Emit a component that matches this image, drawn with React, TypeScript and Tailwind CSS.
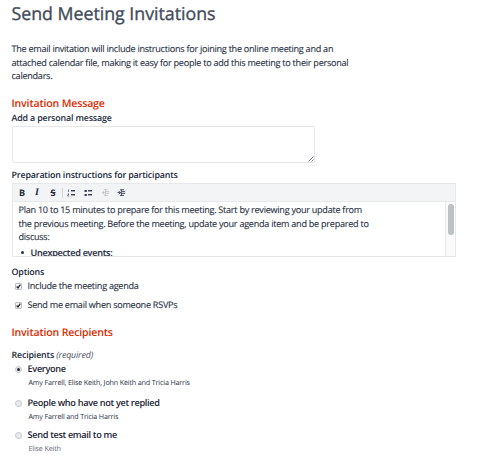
import React from 'react';

const font = 'font-["Open_Sans","Noto_Sans",sans-serif] [text-rendering:geometricPrecision]';
const body = 'text-[9.1px] tracking-[-0.265px] [-webkit-text-stroke:0.12px_#2a3143]';
const label = 'text-[8.9px] leading-[14px] font-semibold tracking-[-0.17px] text-[#222a3d]';
const section = 'text-[10.6px] leading-[15px] font-semibold tracking-[-0.17px] text-[#dc2c00]';

function ListIcon({ ordered }: { ordered?: boolean }) {
  return (
    <svg width="9" height="8" viewBox="0 0 9 8" fill="none" stroke="#3b4252">
      {ordered ? (
        <path d="M1.5 0.5v2.5M0.5 5h1.5l-1.5 2h1.7" strokeWidth="0.7" />
      ) : (
        <path d="M0.5 2h2.3M0.5 6h2.3" strokeWidth="2" />
      )}
      <path d="M4 1.5h4M4 5.5h4" strokeWidth="1" />
      <path d="M4 2.5h4M4 6.5h4" strokeWidth="1" opacity="0.45" />
    </svg>
  );
}

function IndentIcon({ out }: { out?: boolean }) {
  return (
    <svg width="9" height="8" viewBox="0 0 9 8" fill="none" stroke={out ? '#c3c6cb' : '#3b4252'}>
      <path d="M3 0.8h4M5 2.6h3.2M5 4.4h3.2M3 6.4h4M4.4 0.5v6.5" strokeWidth="0.9" />
      <path d={out ? 'M3.2 2.2L1.2 3.6l2 1.4M1 3.6h3' : 'M0.5 3.6h3M1.7 2.2l2 1.4-2 1.4'} strokeWidth="0.9" />
    </svg>
  );
}

function Checkbox() {
  return (
    <span className="flex h-[7px] w-[7px] items-center justify-center rounded-[1px] border border-[#bfc2c5] bg-[#f1f2f3]">
      <svg className="shrink-0" width="7" height="7" viewBox="0 0 7 7" fill="none" stroke="#20242c" strokeWidth="1.2">
        <path d="M1.7 3.5l1.3 1.5L5.3 1.6" />
      </svg>
    </span>
  );
}

function Radio({ checked }: { checked?: boolean }) {
  return (
    <span className="flex h-[7px] w-[7px] items-center justify-center rounded-full border border-[#c3c6c9] bg-[#e8e9eb]">
      {checked && <span className="h-[3px] w-[3px] rounded-full bg-[#252a33]" />}
    </span>
  );
}

function Recipient({ name, people, checked, muted }: { name: string; people: string; checked?: boolean; muted?: boolean }) {
  return (
    <div>
      <div className="flex h-[14px] items-center gap-[6px] pl-[3px]">
        <Radio checked={checked} />
        <span className="text-[9.2px] font-semibold tracking-[-0.33px] text-[#1b2336]">{name}</span>
      </div>
      <div className={`h-[14px] pl-[17px] text-[7.2px] leading-[14px] tracking-[-0.17px] ${muted ? 'text-[#666b78]' : 'text-[#2c3345]'}`}>
        {people}
      </div>
    </div>
  );
}

export default function App() {
  return (
    <main className={`${font} h-[456px] w-[480px] overflow-hidden bg-white pl-[11.5px] whitespace-nowrap text-[#2a3143]`}>
      <h1 className="h-[42px] text-[17.8px] leading-[29px] font-medium tracking-[-0.02px] text-[#434b5a] [-webkit-text-stroke:0.35px_#434b5a]">Send Meeting Invitations</h1>
      <p className={`h-[55px] leading-[13.5px] ${body}`}>
        The email invitation will include instructions for joining the online meeting and an
        <br />
        attached calendar file, making it easy for people to add this meeting to their personal
        <br />
        calendars.
      </p>
      <h2 className={`h-[14px] ${section}`}>Invitation Message</h2>
      <h3 className={`h-[15px] ${label}`}>Add a personal message</h3>
      <div className="flex h-[37px] w-[303px] items-end justify-end rounded-[2px] border border-[#e6e7e9]">
        <svg width="6" height="6" viewBox="0 0 6 6" stroke="#62666d" strokeWidth="0.9">
          <path d="M0.5 5.5l5-5M3.5 5.5l2-2" />
        </svg>
      </div>
      <h3 className={`mt-[5px] h-[15px] ${label}`}>Preparation instructions for participants</h3>
      <div className="h-[74px] w-[444.5px] overflow-hidden border border-[#e6e8ea]">
        <div className="flex h-[18px] items-center border-b border-[#e6e8ea] bg-[#f3f4f6] pl-[6.5px] text-[9px] leading-none text-[#222a3d]">
          <span className="w-[16px] font-bold">B</span>
          <span className="w-[15.5px] font-['Liberation_Serif',serif] text-[10px] font-bold italic">I</span>
          <span className="w-[11.5px] font-bold line-through">S</span>
          <span className="mr-[4px] h-[10px] w-px bg-[#d4d6d9]" />
          <span className="w-[17px]"><ListIcon ordered /></span>
          <span className="w-[17px]"><ListIcon /></span>
          <span className="w-[16px]"><IndentIcon out /></span>
          <IndentIcon />
        </div>
        <div className="flex h-[54px]">
          <div className={`flex-1 overflow-hidden pt-[1px] pl-[6px] leading-[13.5px] ${body}`}>
            <p>
              Plan 10 to 15 minutes to prepare for this meeting. Start by reviewing your update from
              <br />
              the previous meeting. Before the meeting, update your agenda item and be prepared to
              <br />
              discuss:
            </p>
            <div className="mt-[2px] flex items-center font-semibold">
              <span className="mr-[7px] ml-[2px] h-[3px] w-[3px] rounded-full bg-[#2a3143]" />
              Unexpected events:
            </div>
          </div>
          <div className="w-[10.5px] border-l border-[#e8eaec] bg-[#fafafa] pt-[2px] pl-[2px]">
            <div className="h-[31px] w-[6px] rounded-full bg-[#bec1c4]" />
          </div>
        </div>
      </div>
      <h3 className={`mt-[8px] h-[14px] ${label}`}>Options</h3>
      <div className={`flex h-[14px] items-center gap-[6px] pl-[3px] ${body}`}>
        <Checkbox />
        Include the meeting agenda
      </div>
      <div className={`mt-[5px] flex h-[14px] items-center gap-[6px] pl-[3px] ${body}`}>
        <Checkbox />
        Send me email when someone RSVPs
      </div>
      <h2 className={`mt-[14px] h-[22px] ${section}`}>Invitation Recipients</h2>
      <h3 className={`h-[14px] ${label}`}>
        Recipients <i className="font-normal text-[#4d5362]">(required)</i>
      </h3>
      <div className="flex flex-col">
        <Recipient name="Everyone" people="Amy Farrell, Elise Keith, John Keith and Tricia Harris" checked />
        <div className="mt-[6px]">
          <Recipient name="People who have not yet replied" people="Amy Farrell and Tricia Harris" />
        </div>
        <div className="mt-[4px]">
          <Recipient name="Send test email to me" people="Elise Keith" muted />
        </div>
      </div>
    </main>
  );
}
